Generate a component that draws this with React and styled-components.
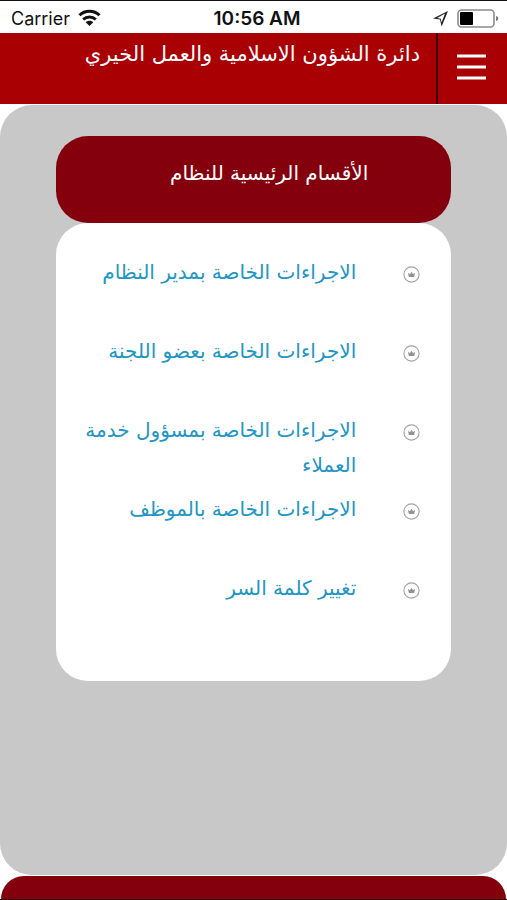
import React, { useState } from 'react'
import styled, { createGlobalStyle } from 'styled-components'

const GlobalStyle = createGlobalStyle`
  * {
    box-sizing: border-box;
  }
  body {
    margin: 0;
    background: #fff;
    overflow: hidden;
    font-family: 'DejaVu Sans', sans-serif;
  }
`

const Page = styled.div`
  display: flex;
  flex-direction: column;
  height: 100vh;
  border-top: 1px solid #111;
  border-bottom: 1px solid #2a0508;
`

const StatusBar = styled.div`
  display: grid;
  grid-template-columns: 1fr auto 1fr;
  align-items: center;
  flex: none;
  height: 32px;
  padding: 2px 8px 0 11px;
  font-family: Inter, sans-serif;
  font-size: 18px;
  color: #111;
`

const StatusSide = styled.div`
  display: flex;
  align-items: center;
  justify-content: ${props => (props.$end ? 'flex-end' : 'flex-start')};
  gap: 8px;
`

const Clock = styled.time`
  padding-left: 4px;
  font-size: 19px;
  font-weight: 600;
`

const Header = styled.header`
  display: flex;
  flex: none;
  height: 71px;
  background: #a90004;
  color: #fff;
`

const Title = styled.h1`
  flex: 1;
  margin: 0;
  padding: 4px 16px 0;
  font-size: 21px;
  font-weight: 400;
  line-height: 35px;
`

const MenuButton = styled.button`
  display: flex;
  align-items: center;
  justify-content: center;
  width: 71px;
  padding: 0 2px 3px 0;
  border: 0;
  border-left: 2px solid #3c0003;
  background: none;
  color: #fff;
`

const Content = styled.main`
  flex: 1;
  margin-top: 1px;
  padding: 31px 11% 0;
  border-radius: 32px;
  background: #c8c8c8;
`

const SectionTitle = styled.h2`
  height: 87px;
  margin: 0;
  padding: 20px 21% 0 16px;
  border-radius: 32px;
  background: #85000d;
  color: #fff;
  font-size: 20px;
  font-weight: 400;
  line-height: 35px;
`

const Panel = styled.ul`
  margin: 0;
  padding: 32px 31px 31px 24px;
  border-radius: 32px;
  background: #fff;
  list-style: none;
`

const Item = styled.li`
  display: flex;
  align-items: flex-start;
  gap: 47px;
  height: 79px;
`

const Bullet = styled.svg`
  flex: none;
  margin-top: 11px;
`

const ItemLink = styled.a`
  flex: 1;
  color: #2196c4;
  font-size: 20px;
  line-height: 35px;
  text-decoration: none;
`

const Footer = styled.footer`
  flex: none;
  height: 23px;
  margin: 1px 1px 0;
  border-radius: 32px 32px 0 0;
  background: #85000d;
`

const items = [
  'الاجراءات الخاصة بمدير النظام',
  'الاجراءات الخاصة بعضو اللجنة',
  'الاجراءات الخاصة بمسؤول خدمة العملاء',
  'الاجراءات الخاصة بالموظف',
  'تغيير كلمة السر',
]

const WifiIcon = () => (
  <svg width="23" height="18" viewBox="0 0 23 18" fill="none" stroke="#111" strokeWidth="3" aria-hidden="true">
    <path d="M1.5 6.2C7 .8 16 .8 21.5 6.2" />
    <path d="M5.2 10.500C8.800 7 14.200 7 17.800 10.500" />
    <path d="M11.5 17l-3.800-3.700c2.100-2 5.500-2 7.600 0z" fill="#111" stroke="none" />
  </svg>
)

const LocationIcon = () => (
  <svg width="17" height="17" viewBox="0 0 17 17" aria-hidden="true">
    <path d="M16 1L9.600 16.500 8 9.500 1 8.500z" fill="#222" />
    <path d="M13 3.500L9.600 12.500 8.800 8.700 5.200 7.900z" fill="#fff" />
  </svg>
)

const BatteryIcon = () => (
  <svg width="42" height="19" viewBox="0 0 42 19" aria-hidden="true">
    <rect x="1" y="1" width="36" height="17" rx="3.500" fill="none" stroke="#8c8c8c" strokeWidth="1.600" />
    <rect x="3" y="3" width="13" height="13" rx="1" fill="#000" />
    <path d="M39 7c3 1 3 4 0 5z" fill="#777" />
  </svg>
)

const CrownBullet = () => (
  <Bullet width="17" height="17" viewBox="0 0 17 17" aria-hidden="true">
    <circle cx="8.500" cy="8.500" r="7.600" fill="none" stroke="#a3a3a3" strokeWidth="1.100" />
    <path d="M5.800 11L5 6.800l2 1.500 1.500-2.500L10 8.300l2-1.500-.8 4.200z" fill="#929292" />
  </Bullet>
)

export default function App() {
  const [open, setOpen] = useState(false)

  return (
    <>
      <GlobalStyle />
      <Page>
        <StatusBar>
          <StatusSide>
            <span>Carrier</span>
            <WifiIcon />
          </StatusSide>
          <Clock>10:56 AM</Clock>
          <StatusSide $end>
            <LocationIcon />
            <BatteryIcon />
          </StatusSide>
        </StatusBar>
        <Header dir="rtl" lang="ar">
          <MenuButton aria-label="القائمة" aria-expanded={open} onClick={() => setOpen(!open)}>
            <svg width="29" height="28" viewBox="0 0 29 28" stroke="#fff" strokeWidth="3" aria-hidden="true">
              <path d="M0 3h29M0 14h29M0 25h29" />
            </svg>
          </MenuButton>
          <Title>دائرة الشؤون الاسلامية والعمل الخيري</Title>
        </Header>
        <Content dir="rtl" lang="ar">
          <SectionTitle>الأقسام الرئيسية للنظام</SectionTitle>
          <Panel>
            {items.map(text => (
              <Item key={text}>
                <CrownBullet />
                <ItemLink href="#">{text}</ItemLink>
              </Item>
            ))}
          </Panel>
        </Content>
        <Footer />
      </Page>
    </>
  )
}
